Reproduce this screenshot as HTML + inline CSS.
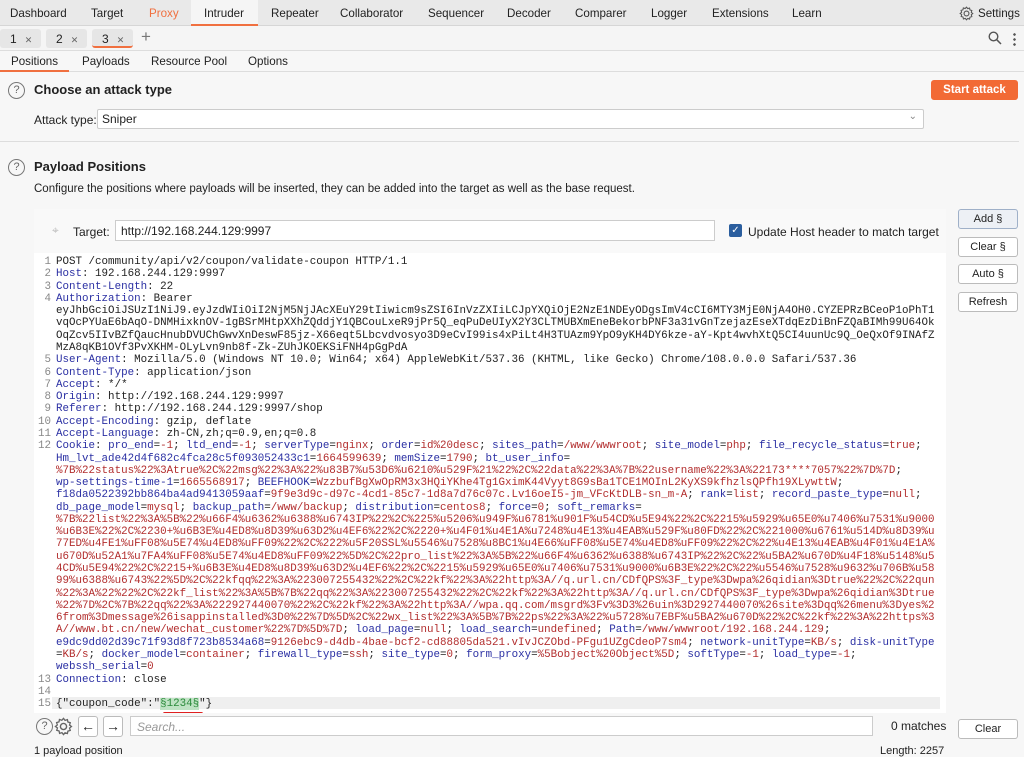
<!DOCTYPE html>
<html><head><meta charset="utf-8"><style>
*{margin:0;padding:0;box-sizing:border-box}
body{width:1024px;height:751px;overflow:hidden;background:#f7f7f7;font-family:"Liberation Sans",sans-serif;font-size:12px;color:#222;position:relative}
.a{position:absolute}
.nav{top:0;left:0;width:1024px;height:26px;background:#e9e9e9;border-bottom:1px solid #d6d6d6}
.nav span{position:absolute;top:7px;font-size:11.6px}
.tabs{top:26px;left:0;width:1024px;height:25px;background:#f5f5f5;border-bottom:1px solid #ddd}
.tb{position:absolute;top:3px;height:19px;background:#e6e6e6;border-radius:3px;font-size:12px;padding:3px 0 0 10px}
.tb i{font-style:normal;font-size:9px;color:#666;margin-left:8px}
.sub{top:51px;left:0;width:1024px;height:21px;background:#f7f7f7;border-bottom:1px solid #ddd}
.sub span{position:absolute;top:4px;font-size:11.6px}
.q{width:17px;height:17px;border:1.5px solid #777;border-radius:50%;font-size:11px;color:#666;text-align:center;line-height:14px}
h2{font-size:13px;font-weight:bold;position:absolute}
.btn{position:absolute;background:#fff;border:1px solid #bbb;border-radius:3px;font-size:11px;text-align:center;line-height:18px;height:20px}
.ed{position:absolute;left:34px;top:253px;width:912px;height:460px;background:#fff;overflow:hidden}
.r{position:absolute;left:22px;white-space:pre;font-family:"Liberation Mono",monospace;font-size:10.85px;line-height:12.28px;color:#222}
.n{position:absolute;left:0;width:17px;text-align:right;font-family:"Liberation Mono",monospace;font-size:10.85px;color:#888;line-height:12.28px}
.b{color:#2a2fa3}.d{color:#b22d2d}
</style></head><body>
<div class="a nav">
<span style="left:10px">Dashboard</span><span style="left:91px">Target</span><span style="left:149px;color:#f07040">Proxy</span>
<div class="a" style="left:191px;top:0;width:67px;height:26px;background:#f5f5f5;border-bottom:2px solid #f07040"></div>
<span style="left:204px">Intruder</span><span style="left:271px">Repeater</span><span style="left:340px">Collaborator</span><span style="left:428px">Sequencer</span><span style="left:507px">Decoder</span><span style="left:575px">Comparer</span><span style="left:651px">Logger</span><span style="left:712px">Extensions</span><span style="left:792px">Learn</span>
<svg class="a" style="left:959px;top:6px" width="15" height="15" viewBox="0 0 16 16"><circle cx="8" cy="8" r="2.6" fill="none" stroke="#555" stroke-width="1.2"/><path d="M8 1.2l1.3 1.6 2-.6.4 2 2 .6-.6 2 1.6 1.2-1.6 1.3.6 2-2 .6-.4 2-2-.6L8 14.8l-1.3-1.6-2 .6-.4-2-2-.6.6-2L1.2 8l1.6-1.3-.6-2 2-.6.4-2 2 .6z" fill="none" stroke="#555" stroke-width="1.1"/></svg>
<span style="left:978px">Settings</span>
</div>
<div class="a tabs">
<div class="tb" style="left:0;width:41px">1<i>✕</i></div>
<div class="tb" style="left:46px;width:41px">2<i>✕</i></div>
<div class="tb" style="left:92px;width:41px;border-bottom:2px solid #f07040">3<i>✕</i></div>
<span class="a" style="left:141px;top:1px;font-size:17px;color:#777">+</span>
<svg class="a" style="left:988px;top:5px" width="14" height="14" viewBox="0 0 14 14"><circle cx="5.5" cy="5.5" r="4.3" fill="none" stroke="#555" stroke-width="1.4"/><path d="M8.7 8.7L13 13" stroke="#555" stroke-width="1.5"/></svg>
<div class="a" style="left:1013px;top:6px;width:3px;height:14px;background:radial-gradient(circle,#555 1.2px,transparent 1.4px) 0 0/3px 5px"></div>
</div>
<div class="a sub">
<span style="left:11px">Positions</span><div class="a" style="left:0;top:19px;width:69px;height:2px;background:#f07040"></div>
<span style="left:82px">Payloads</span><span style="left:151px">Resource Pool</span><span style="left:248px">Options</span>
</div>
<div class="a q" style="left:8px;top:82px">?</div>
<h2 style="left:34px;top:82px">Choose an attack type</h2>
<div class="a" style="left:931px;top:80px;width:87px;height:20px;background:#f26a35;border-radius:3px;color:#fff;font-weight:bold;text-align:center;line-height:20px;font-size:11.5px">Start attack</div>
<span class="a" style="left:34px;top:113px">Attack type:</span>
<div class="a" style="left:97px;top:109px;width:827px;height:20px;background:#fff;border:1px solid #ccc;border-radius:2px;padding:2px 4px">Sniper<span class="a" style="right:6px;top:1px;color:#888;font-size:10px">&#8964;</span></div>
<div class="a" style="left:0;top:141px;width:1019px;height:1px;background:#ddd"></div>
<div class="a q" style="left:8px;top:159px">?</div>
<h2 style="left:34px;top:159px">Payload Positions</h2>
<span class="a" style="left:34px;top:183px;font-size:11.5px">Configure the positions where payloads will be inserted, they can be added into the target as well as the base request.</span>
<div class="a" style="left:34px;top:209px;width:912px;height:44px;background:#f9f9f9"></div>
<span class="a" style="left:52px;top:223px;color:#bbb">⌖</span>
<span class="a" style="left:73px;top:225px">Target:</span>
<div class="a" style="left:115px;top:220px;width:600px;height:21px;background:#fff;border:1px solid #ccc;padding:3px 5px">http://192.168.244.129:9997</div>
<div class="a" style="left:729px;top:224px;width:13px;height:13px;background:#2b5e9e;border-radius:2px;color:#fff;font-size:10px;line-height:13px;text-align:center">✓</div>
<span class="a" style="left:748px;top:225px">Update Host header to match target</span>
<div class="btn" style="left:958px;top:209px;width:60px;background:#edf0f5;border-color:#9fb0c8">Add §</div>
<div class="btn" style="left:958px;top:237px;width:60px">Clear §</div>
<div class="btn" style="left:958px;top:264px;width:60px">Auto §</div>
<div class="btn" style="left:958px;top:292px;width:60px">Refresh</div>
<div class="ed">
<div class="a" style="left:18px;top:444px;width:888px;height:12px;background:#efefef"></div>
<div class="n" style="top:3px">1<br>2<br>3<br>4<br><br><br><br><br>5<br>6<br>7<br>8<br>9<br>10<br>11<br>12<br><br><br><br><br><br><br><br><br><br><br><br><br><br><br><br><br><br><br>13<br>14<br>15</div>
<div class="r" style="top:3px">POST /community/api/v2/coupon/validate-coupon HTTP/1.1
<span class="b">Host</span>: 192.168.244.129:9997
<span class="b">Content-Length</span>: 22
<span class="b">Authorization</span>: Bearer
eyJhbGciOiJSUzI1NiJ9.eyJzdWIiOiI2NjM5NjJAcXEuY29tIiwicm9sZSI6InVzZXIiLCJpYXQiOjE2NzE1NDEyODgsImV4cCI6MTY3MjE0NjA4OH0.CYZEPRzBCeoP1oPhT1
vqOcPYUaE6bAqO-DNMHixknOV-1gBSrMHtpXXhZQddjY1QBCouLxeR9jPr5Q_eqPuDeUIyX2Y3CLTMUBXmEneBekorbPNF3a31vGnTzejazEseXTdqEzDiBnFZQaBIMh99U64Ok
OqZcv5IIvBZfQaucHnubDVUChGwvXnDeswF85jz-X66eqt5Lbcvdvosyo3D9eCvI99is4xPiLt4H3TUAzm9YpO9yKH4DY6kze-aY-Kpt4wvhXtQ5CI4uunUc9Q_OeQxOf9INAfZ
MzA8qKB1OVf3PvXKHM-OLyLvn9nb8f-Zk-ZUhJKOEKSiFNH4pGgPdA
<span class="b">User-Agent</span>: Mozilla/5.0 (Windows NT 10.0; Win64; x64) AppleWebKit/537.36 (KHTML, like Gecko) Chrome/108.0.0.0 Safari/537.36
<span class="b">Content-Type</span>: application/json
<span class="b">Accept</span>: */*
<span class="b">Origin</span>: http://192.168.244.129:9997
<span class="b">Referer</span>: http://192.168.244.129:9997/shop
<span class="b">Accept-Encoding</span>: gzip, deflate
<span class="b">Accept-Language</span>: zh-CN,zh;q=0.9,en;q=0.8
<span class="b">Cookie</span>: <span class="b">pro_end</span>=<span class="d">-1</span>; <span class="b">ltd_end</span>=<span class="d">-1</span>; <span class="b">serverType</span>=<span class="d">nginx</span>; <span class="b">order</span>=<span class="d">id%20desc</span>; <span class="b">sites_path</span>=<span class="d">/www/wwwroot</span>; <span class="b">site_model</span>=<span class="d">php</span>; <span class="b">file_recycle_status</span>=<span class="d">true</span>;
<span class="b">Hm_lvt_ade42d4f682c4fca28c5f093052433c1</span>=<span class="d">1664599639</span>; <span class="b">memSize</span>=<span class="d">1790</span>; <span class="b">bt_user_info</span>=
<span class="d">%7B%22status%22%3Atrue%2C%22msg%22%3A%22%u83B7%u53D6%u6210%u529F%21%22%2C%22data%22%3A%7B%22username%22%3A%22173****7057%22%7D%7D</span>;
<span class="b">wp-settings-time-1</span>=<span class="d">1665568917</span>; <span class="b">BEEFHOOK</span>=<span class="d">WzzbufBgXwOpRM3x3HQiYKhe4Tg1GximK44Vyyt8G9sBa1TCE1MOInL2KyXS9kfhzlsQPfh19XLywttW</span>;
<span class="b">f18da0522392bb864ba4ad9413059aaf</span>=<span class="d">9f9e3d9c-d97c-4cd1-85c7-1d8a7d76c07c.Lv16oeI5-jm_VFcKtDLB-sn_m-A</span>; <span class="b">rank</span>=<span class="d">list</span>; <span class="b">record_paste_type</span>=<span class="d">null</span>;
<span class="b">db_page_model</span>=<span class="d">mysql</span>; <span class="b">backup_path</span>=<span class="d">/www/backup</span>; <span class="b">distribution</span>=<span class="d">centos8</span>; <span class="b">force</span>=<span class="d">0</span>; <span class="b">soft_remarks</span>=
<span class="d">%7B%22list%22%3A%5B%22%u66F4%u6362%u6388%u6743IP%22%2C%225%u5206%u949F%u6781%u901F%u54CD%u5E94%22%2C%2215%u5929%u65E0%u7406%u7531%u9000
%u6B3E%22%2C%2230+%u6B3E%u4ED8%u8D39%u63D2%u4EF6%22%2C%2220+%u4F01%u4E1A%u7248%u4E13%u4EAB%u529F%u80FD%22%2C%221000%u6761%u514D%u8D39%u
77ED%u4FE1%uFF08%u5E74%u4ED8%uFF09%22%2C%222%u5F20SSL%u5546%u7528%u8BC1%u4E66%uFF08%u5E74%u4ED8%uFF09%22%2C%22%u4E13%u4EAB%u4F01%u4E1A%
u670D%u52A1%u7FA4%uFF08%u5E74%u4ED8%uFF09%22%5D%2C%22pro_list%22%3A%5B%22%u66F4%u6362%u6388%u6743IP%22%2C%22%u5BA2%u670D%u4F18%u5148%u5
4CD%u5E94%22%2C%2215+%u6B3E%u4ED8%u8D39%u63D2%u4EF6%22%2C%2215%u5929%u65E0%u7406%u7531%u9000%u6B3E%22%2C%22%u5546%u7528%u9632%u706B%u58
99%u6388%u6743%22%5D%2C%22kfqq%22%3A%223007255432%22%2C%22kf%22%3A%22http%3A//q.url.cn/CDfQPS%3F_type%3Dwpa%26qidian%3Dtrue%22%2C%22qun
%22%3A%22%22%2C%22kf_list%22%3A%5B%7B%22qq%22%3A%223007255432%22%2C%22kf%22%3A%22http%3A//q.url.cn/CDfQPS%3F_type%3Dwpa%26qidian%3Dtrue
%22%7D%2C%7B%22qq%22%3A%222927440070%22%2C%22kf%22%3A%22http%3A//wpa.qq.com/msgrd%3Fv%3D3%26uin%3D2927440070%26site%3Dqq%26menu%3Dyes%2
6from%3Dmessage%26isappinstalled%3D0%22%7D%5D%2C%22wx_list%22%3A%5B%7B%22ps%22%3A%22%u5728%u7EBF%u5BA2%u670D%22%2C%22kf%22%3A%22https%3
A//www.bt.cn/new/wechat_customer%22%7D%5D%7D</span>; <span class="b">load_page</span>=<span class="d">null</span>; <span class="b">load_search</span>=<span class="d">undefined</span>; <span class="b">Path</span>=<span class="d">/www/wwwroot/192.168.244.129</span>;
<span class="b">e9dc9dd02d39c71f93d8f723b8534a68</span>=<span class="d">9126ebc9-d4db-4bae-bcf2-cd88805da521.vIvJCZObd-PFgu1UZgCdeoP7sm4</span>; <span class="b">network-unitType</span>=<span class="d">KB/s</span>; <span class="b">disk-unitType</span>
=<span class="d">KB/s</span>; <span class="b">docker_model</span>=<span class="d">container</span>; <span class="b">firewall_type</span>=<span class="d">ssh</span>; <span class="b">site_type</span>=<span class="d">0</span>; <span class="b">form_proxy</span>=<span class="d">%5Bobject%20Object%5D</span>; <span class="b">softType</span>=<span class="d">-1</span>; <span class="b">load_type</span>=<span class="d">-1</span>;
<span class="b">webssh_serial</span>=<span class="d">0</span>
<span class="b">Connection</span>: close

{"coupon_code":"<span style="background:#bfe3c4;color:#2a8a3a">§1234§</span>"}</div>
<div class="a" style="left:129px;top:459px;width:40px;height:3px;background:#e02020;border-radius:2px"></div>
</div>
<div class="a q" style="left:36px;top:718px">?</div>
<svg class="a" style="left:54px;top:717px" width="19" height="19" viewBox="0 0 16 16"><circle cx="8" cy="8" r="2.6" fill="none" stroke="#666" stroke-width="1.2"/><path d="M8 1.2l1.3 1.6 2-.6.4 2 2 .6-.6 2 1.6 1.2-1.6 1.3.6 2-2 .6-.4 2-2-.6L8 14.8l-1.3-1.6-2 .6-.4-2-2-.6.6-2L1.2 8l1.6-1.3-.6-2 2-.6.4-2 2 .6z" fill="none" stroke="#666" stroke-width="1.1"/></svg>
<div class="btn" style="left:78px;top:716px;width:20px;height:21px;font-size:14px">←</div>
<div class="btn" style="left:103px;top:716px;width:20px;height:21px;font-size:14px">→</div>
<div class="a" style="left:130px;top:716px;width:743px;height:20px;background:#fff;border:1px solid #ccc;padding:3px 6px;color:#999;font-style:italic">Search...</div>
<span class="a" style="left:891px;top:719px">0 matches</span>
<div class="btn" style="left:958px;top:719px;width:60px">Clear</div>
<span class="a" style="left:34px;top:745px;font-size:11px">1 payload position</span>
<span class="a" style="left:880px;top:745px;font-size:11px">Length: 2257</span>
</body></html>
